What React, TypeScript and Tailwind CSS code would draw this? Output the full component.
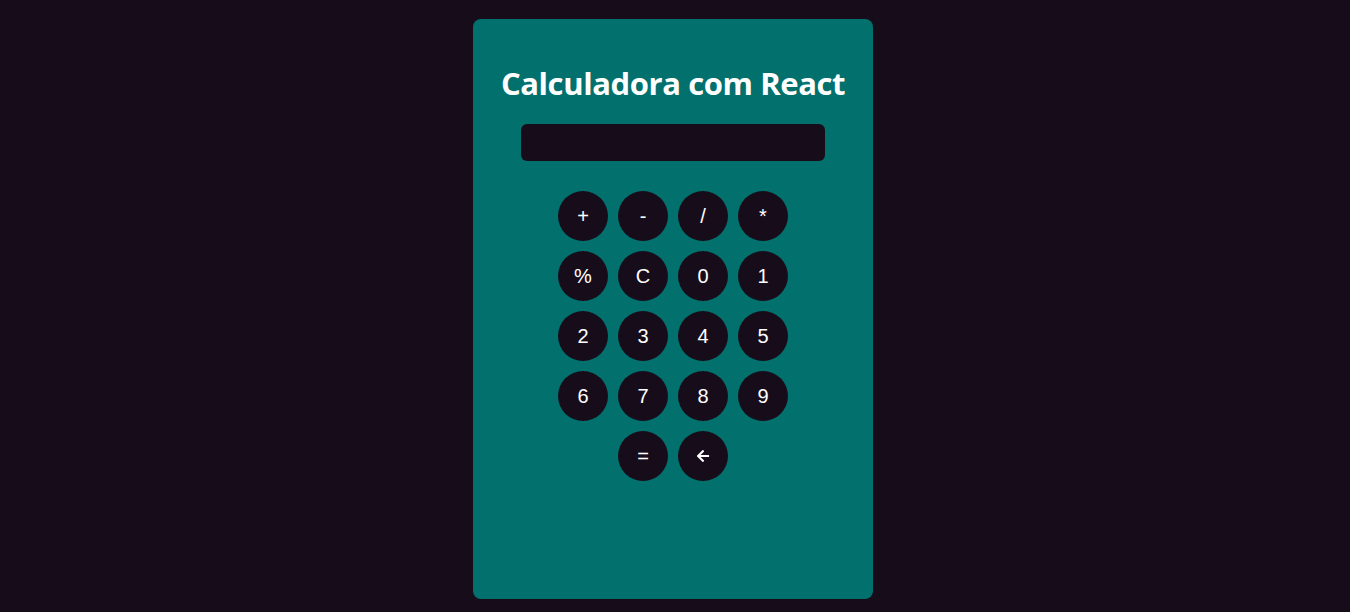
import { FaArrowLeft } from "react-icons/fa";

const keys = ["+", "-", "/", "*", "%", "C", "0", "1", "2", "3", "4", "5", "6", "7", "8", "9", "="];

export default function App() {
  return (
    <div className="min-h-screen w-full bg-[#170d1a] flex justify-center pt-[19px]">
      <div className="w-[400px] h-[580px] mr-[4px] bg-[#02706d] rounded-lg flex flex-col items-center pt-[44px]">
        <h1 className="text-[31px] leading-[40px] font-bold text-white font-['Open_Sans',sans-serif] tracking-[-0.4px]">
          Calculadora com React
        </h1>
        <div className="mt-[21px] w-[304px] h-[37px] rounded-md bg-[#170d1a]" />
        <div className="mt-[30px] w-[230px] flex flex-wrap justify-center gap-[10px]">
          {keys.map((k) => (
            <button
              key={k}
              className="w-[50px] h-[50px] rounded-full bg-[#170d1a] text-white text-[20px] font-['Liberation_Sans',Arial,sans-serif] flex items-center justify-center"
            >
              {k}
            </button>
          ))}
          <button className="w-[50px] h-[50px] rounded-full bg-[#170d1a] text-white flex items-center justify-center">
            <FaArrowLeft className="w-[14px] h-[14px]" />
          </button>
        </div>
      </div>
    </div>
  );
}
